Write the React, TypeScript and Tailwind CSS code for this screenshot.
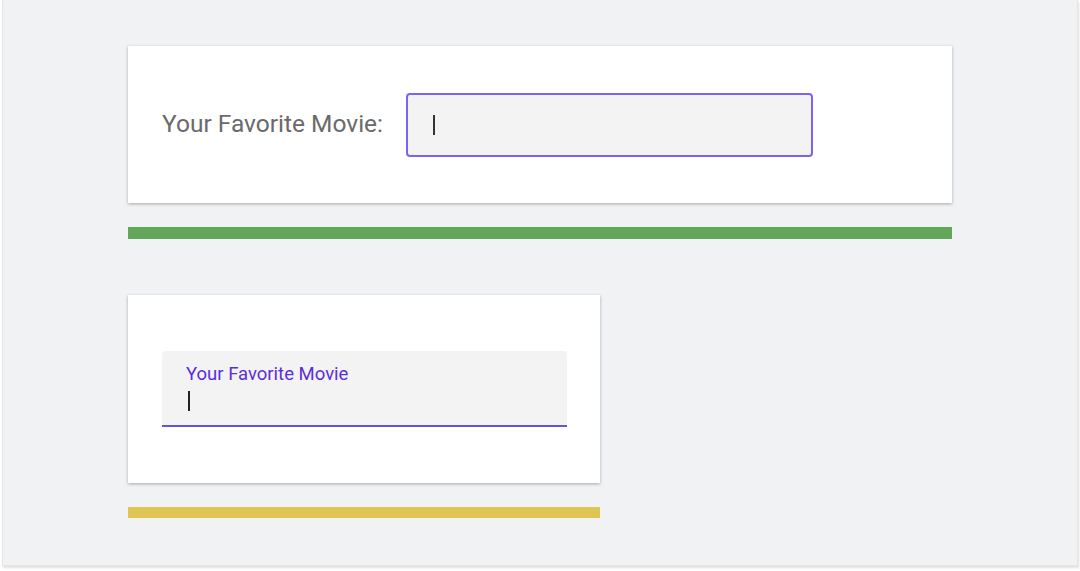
import React from "react"

const App = () => {
  return (
    <div className="h-[571px] w-[1080px] overflow-hidden bg-white font-['Roboto',sans-serif]">
      {/* frame */}
      <div className="ml-[2px] h-[566px] w-[1076px] border border-t-0 border-[#e4e5e7] bg-[#f1f2f4] pl-[125px] pt-[46px] shadow-[1px_2px_2px_rgba(0,0,0,0.12)]">
        {/* inline label card */}
        <div className="flex h-[157px] w-[824px] items-center bg-white pl-[34px] shadow-[0_1px_3px_rgba(0,0,0,0.3)]">
          <span className="text-[24.5px] text-[#6a6a6a]">Your Favorite Movie:</span>
          <div className="ml-[23px] flex h-[64px] w-[407px] items-center rounded-[4px] border-2 border-[#7d62f6] bg-[#f3f3f3] pl-[25px]">
            <div className="h-[20px] w-[2px] bg-[#333333]" />
          </div>
        </div>
        <div className="mt-[24px] h-[12px] w-[824px] bg-[#63a85a]" />

        {/* floating label card */}
        <div className="mt-[56px] h-[188px] w-[472px] bg-white px-[34px] pt-[56px] shadow-[0_1px_3px_rgba(0,0,0,0.3)]">
          <div className="h-[76px] w-[405px] rounded-t-[4px] border-b-2 border-[#6a4fde] bg-[#f3f3f3] pl-[24px] pt-[11px]">
            <div className="text-[18.5px] leading-[24px] text-[#5a2fd9]">Your Favorite Movie</div>
            <div className="ml-[2px] mt-[5px] h-[20px] w-[2px] bg-[#222222]" />
          </div>
        </div>
        <div className="mt-[24px] h-[11px] w-[472px] bg-[#dfc552]" />
      </div>
    </div>
  )
}

export default App
